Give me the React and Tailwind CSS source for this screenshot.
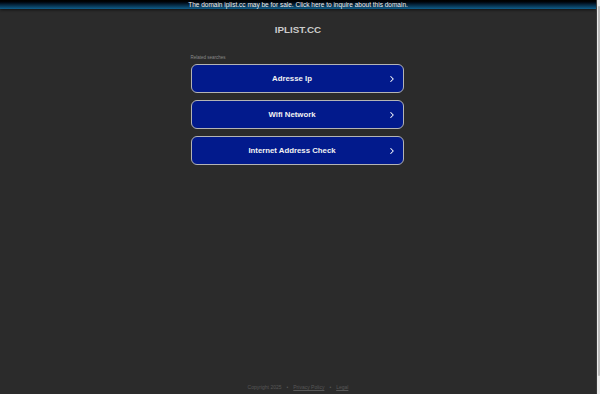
import { ChevronRight } from "lucide-react";

const SEARCHES = ["Adresse Ip", "Wifi Network", "Internet Address Check"];

export default function App() {
  return (
    <div
      className="flex h-[394px] w-[600px] overflow-hidden bg-[#2b2b2b]"
      style={{ fontFamily: '"Liberation Sans", Arial, sans-serif' }}
    >
      <div className="flex flex-1 flex-col">
        <div className="h-[9px] bg-gradient-to-b from-[#000000] via-[#05233a] to-[#0f5f8c] text-center text-[6.5px] leading-[9px] text-[#f0f0f0] shadow-[0_1px_3px_rgba(0,0,0,0.6)]">
          The domain iplist.cc may be for sale. Click here to inquire about this domain.
        </div>

        <h1 className="mt-[15px] text-center text-[9.8px] font-bold leading-[12px] text-[#cccccc]">
          IPLIST.CC
        </h1>

        <div className="mx-auto mt-[19px] w-[213px] -translate-x-[1px]">
          <p className="text-[4.5px] leading-[6px] text-[#8a8a8a]">Related searches</p>
          <div className="mt-[3px] flex flex-col gap-[7px]">
            {SEARCHES.map((s) => (
              <div
                key={s}
                className="flex h-[29px] items-center rounded-[6px] border border-[#b4b4b4] bg-[#021a8c] pl-[10px] pr-[6px] pt-[1px]"
              >
                <span className="flex-1 pr-[4px] text-center text-[7.8px] font-bold text-[#f2f2f2]">
                  {s}
                </span>
                <ChevronRight className="h-[10px] w-[10px] text-white" strokeWidth={2.5} />
              </div>
            ))}
          </div>
        </div>

        <div className="mt-auto mb-[4px] flex justify-center gap-[5px] text-[5px] leading-[6px] text-[#575757]">
          <span>Copyright 2025</span>
          <span>•</span>
          <span className="underline">Privacy Policy</span>
          <span>•</span>
          <span className="underline">Legal</span>
        </div>
      </div>

      <div className="flex w-[4px] flex-col border-l border-[#3a3a3a] bg-[#ededed] py-[6px]">
        <div className="mx-auto h-[370px] w-[2px] rounded-full bg-[#bdbdbd]" />
      </div>
    </div>
  );
}
